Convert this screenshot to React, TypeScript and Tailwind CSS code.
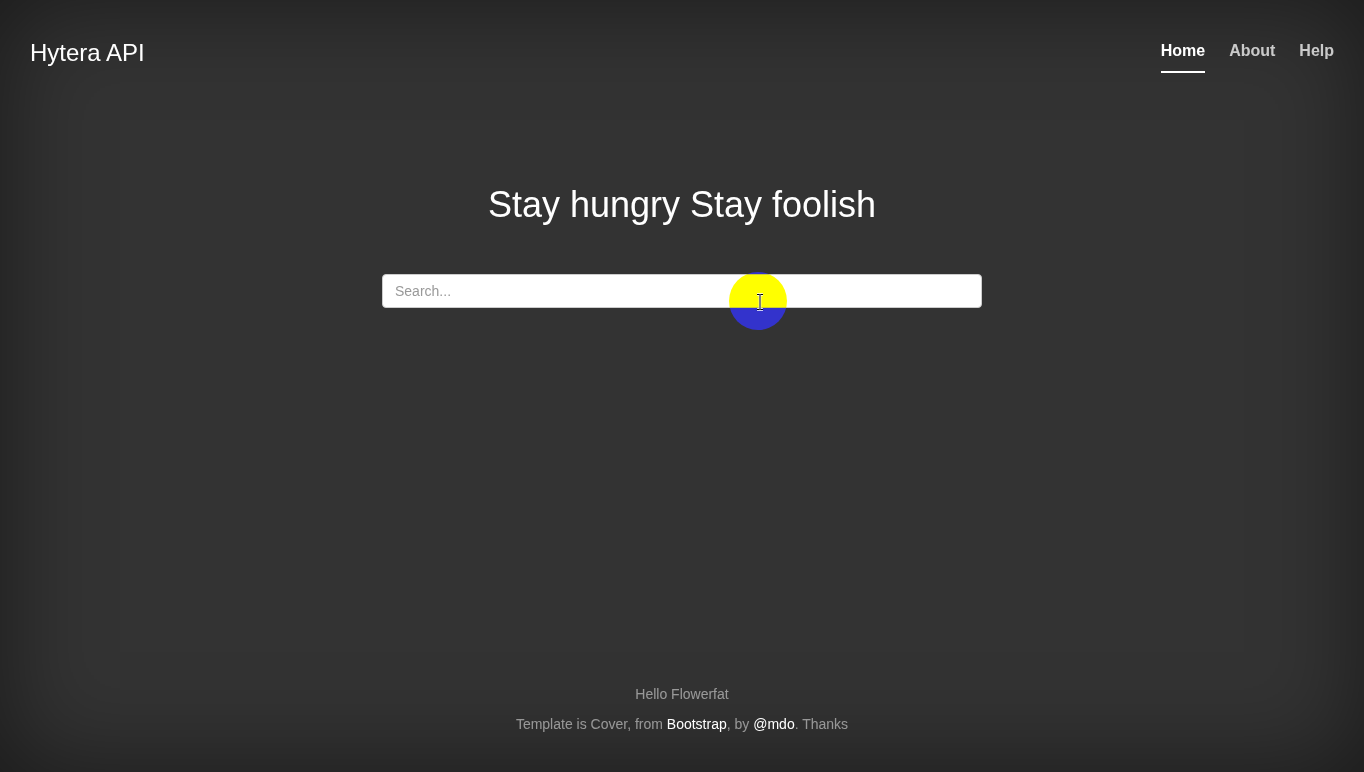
const NavLink = ({ label, active }: { label: string; active?: boolean }) => (
  <a
    href="#"
    className={`py-[10px] text-[16px] leading-[20px] font-bold border-b-2 ${
      active ? 'text-white border-white' : 'text-white/75 border-transparent'
    }`}
  >
    {label}
  </a>
)

const CursorHighlight = () => (
  <>
    {/* click highlight from the screen recorder */}
    <div className="absolute left-[347px] top-[-2px] w-[58px] h-[58px] rounded-full bg-[#0000ff] mix-blend-difference pointer-events-none" />
    <svg
      className="absolute left-[374px] top-[19px] pointer-events-none"
      width="8"
      height="18"
      viewBox="0 0 8 18"
    >
      <path
        d="M1 1.5h2.5L4 2l.5-.5H7M4 2v14M1 16.5h2.5L4 16l.5.5H7"
        fill="none"
        stroke="#fff"
        strokeWidth="2.5"
      />
      <path
        d="M1 1.5h2.5L4 2l.5-.5H7M4 2v14M1 16.5h2.5L4 16l.5.5H7"
        fill="none"
        stroke="#000"
        strokeWidth="1"
      />
    </svg>
  </>
)

export default function App() {
  return (
    <div
      className="h-[772px] flex flex-col bg-[#333] text-white shadow-[inset_0_0_100px_rgba(0,0,0,0.5)]"
      style={{ fontFamily: '"Liberation Sans", Arial, sans-serif' }}
    >
      <header className="pt-[31px] px-[30px] flex justify-between items-start">
        <h3 className="mt-[9px] text-[24px] leading-[26px] text-white">Hytera API</h3>
        <nav className="flex gap-[24px]">
          <NavLink label="Home" active />
          <NavLink label="About" />
          <NavLink label="Help" />
        </nav>
      </header>

      <main className="flex flex-col items-center">
        <h1 className="mt-[112px] text-[36px] leading-[40px] text-white">Stay hungry Stay foolish</h1>
        <div className="relative mt-[49px] w-[600px]">
          <input
            type="text"
            placeholder="Search..."
            className="block w-full h-[34px] px-[12px] bg-white border border-[#ccc] rounded-[4px] text-[14px] text-[#555] placeholder:text-[#999] outline-none"
          />
          <CursorHighlight />
        </div>
      </main>

      <footer className="mt-auto pb-[38px] flex flex-col items-center gap-[10px] text-[14px] leading-[20px] text-white/50">
        <p>Hello Flowerfat</p>
        <p>
          Template is Cover, from <a href="#" className="text-white">Bootstrap</a>, by{' '}
          <a href="#" className="text-white">@mdo</a>. Thanks
        </p>
      </footer>
    </div>
  )
}
